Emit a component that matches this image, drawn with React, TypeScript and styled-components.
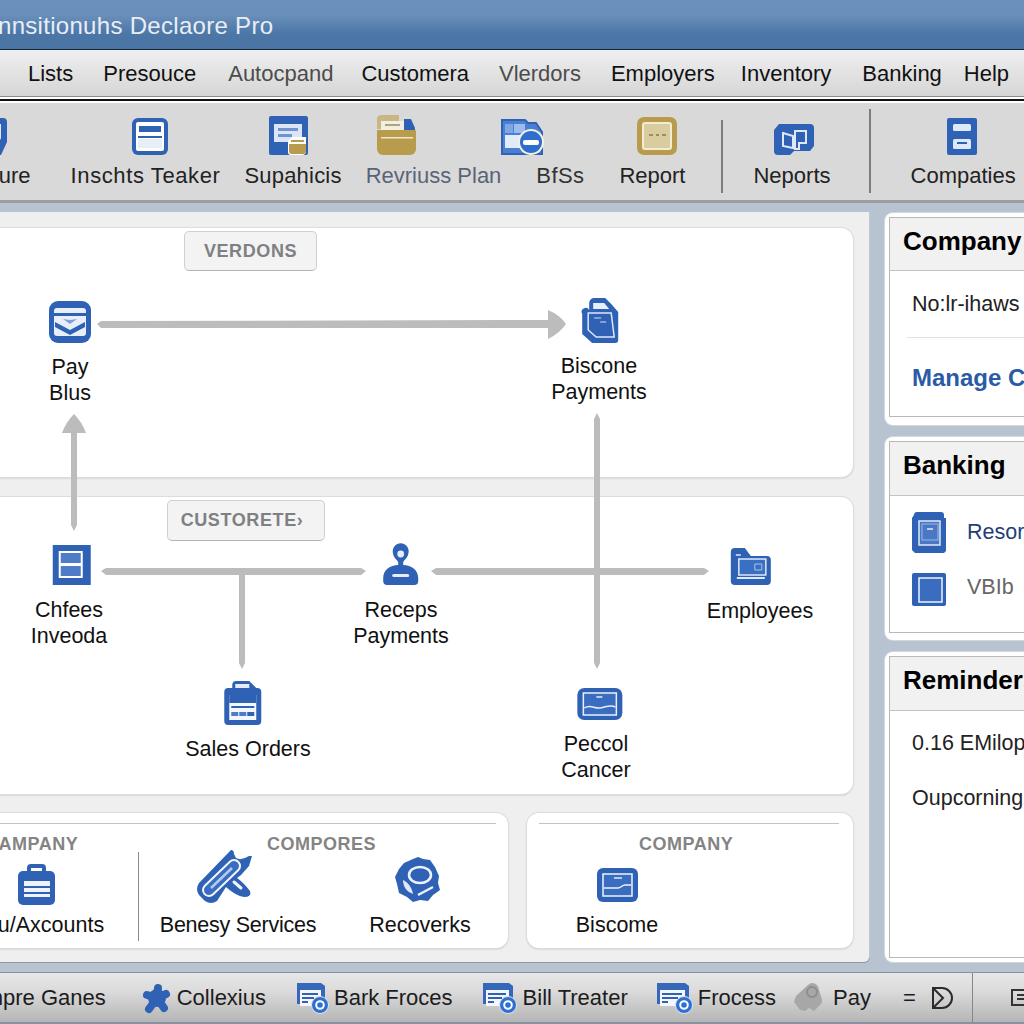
import React from "react";
import styled, { createGlobalStyle } from "styled-components";

const Global = createGlobalStyle`
  html, body { margin: 0; padding: 0; background: #b7c3d1; }
  body { font-family: "Liberation Sans", Arial, sans-serif; color: #111; }
`;
const BLUE = "#2f62b5";
const GOLD = "#b99b4e";

const Page = styled.div`
  width: 1024px; height: 1024px; overflow: hidden; display: flex; flex-direction: column;
  background: #b7c3d1;
`;
const TitleBar = styled.header`
  height: 49px; flex: none; display: flex; align-items: center;
  background: linear-gradient(#6b90bb 0, #6a8fba 30%, #4b76a6 70%, #4a74a4 100%);
  border-bottom: 1px solid #12233a; box-sizing: content-box;
`;
const Title = styled.h1`
  margin: 2px 0 0 -2px; font-size: 24px; font-weight: 400; letter-spacing: 0.3px; color: #e9eef6; line-height: 52px; white-space: nowrap;
`;
const MenuBar = styled.nav`
  height: 47px; flex: none; display: flex; align-items: center; padding: 2px 0 0 28px;
  background: linear-gradient(#efefef, #d6d6d6); border-bottom: 1px solid #8d8d8d; box-sizing: border-box;
`;
const MenuItem = styled.span<{ $gap: number; $dim?: boolean }>`
  margin-left: ${(p) => p.$gap}px; font-size: 22px; color: ${(p) => (p.$dim ? "#4c4c4c" : "#111")}; white-space: nowrap;
`;
const DoubleRule = styled.div`
  height: 6px; flex: none; border-top: 2px solid #fff; border-bottom: 2px solid #fff; box-sizing: border-box; background: #111;
`;
const Toolbar = styled.div`
  height: 97px; flex: none; display: flex; align-items: flex-start; margin-left: -55px;
  width: 1100px; background: #d9d9d9; border-bottom: 3px solid #9d9d9d; box-sizing: content-box;
`;
const ToolItem = styled.div<{ $gap: number }>`
  margin-left: ${(p) => p.$gap}px; display: flex; flex-direction: column; align-items: center;
`;
const ToolIcon = styled.div<{ $shift?: number }>`
  height: 52px; display: flex; align-items: flex-end; transform: translateX(${(p) => p.$shift || 0}px);
`;
const ToolLabel = styled.span<{ $tone?: string; $ls?: number }>`
  margin-top: 8px; font-size: 22px; line-height: 26px; letter-spacing: ${(p) => p.$ls || 0}px; color: ${(p) => p.$tone || "#222"}; white-space: nowrap;
`;
const ToolDivider = styled.div<{ $gap: number; $top: number }>`
  margin-left: ${(p) => p.$gap}px; margin-top: ${(p) => p.$top}px; width: 2px; height: ${(p) => 90 - p.$top}px; background: #7d7d7d;
`;
const Body = styled.div`
  flex: 1; min-height: 0; display: flex; align-items: flex-start; padding-top: 9px; gap: 15px;
`;
const Main = styled.main`
  margin-left: -20px; width: 890px; height: 750px; flex: none; box-sizing: border-box; padding: 16px 16px 0 0;
  background: #efefef; border-right: 1px solid #c4c8cc; border-radius: 0 0 6px 0; box-shadow: 0 1px 0 #8f98a3;
`;
const Diagram = styled.div`
  position: relative; display: flex; flex-direction: column; gap: 20px;
`;
const Card = styled.section<{ $h: number }>`
  height: ${(p) => p.$h}px; box-sizing: border-box; background: #fff; border-radius: 0 12px 12px 0; padding-top: 3px;
  box-shadow: 0 0 0 1px #dcdcdc, 0 1px 2px #b0b0b0;
`;
const Badge = styled.div<{ $left: number; $w: number; $h: number; $trim?: number }>`
  margin-left: ${(p) => p.$left}px; width: ${(p) => p.$w}px; height: ${(p) => p.$h}px; box-sizing: border-box;
  padding-right: ${(p) => p.$trim || 0}px;
  display: flex; align-items: center; justify-content: center; border: 1px solid #cfcfcf; border-bottom-color: #b4b4b4;
  border-radius: 5px; background: #f3f3f3; font-size: 18px; font-weight: 700; letter-spacing: 0.6px; color: #7e8083;
`;
const Canvas = styled.div`
  position: absolute; left: 20px; top: -228px; width: 1024px; height: 800px; pointer-events: none;
`;
const Wires = styled.svg`
  position: absolute; left: 0; top: 0;
`;
const Node = styled.div<{ $x: number; $y: number; $gap: number }>`
  position: absolute; left: ${(p) => p.$x}px; top: ${(p) => p.$y}px; transform: translateX(-50%);
  display: flex; flex-direction: column; align-items: center; gap: ${(p) => p.$gap}px;
`;
const NodeIcon = styled.div<{ $shift?: number }>`
  display: flex; transform: translateX(${(p) => p.$shift || 0}px);
`;
const NodeLabel = styled.div`
  font-size: 21.5px; line-height: 25.5px; text-align: center; white-space: pre; color: #111;
`;
const BottomRow = styled.div`
  display: flex; gap: 19px; margin-top: 19px;
`;
const BottomCard = styled.section<{ $w: number; $radius: string; $ruleLeft: number; $ruleRight: number }>`
  width: ${(p) => p.$w}px; height: 135px; box-sizing: border-box; padding-top: 10px; background: #fff; border-radius: ${(p) => p.$radius};
  box-shadow: 0 0 0 1px #dcdcdc, 0 1px 2px #b0b0b0; flex: none;
  &::before { content: ""; display: block; height: 1px; margin: 0 ${(p) => p.$ruleRight}px 10px ${(p) => p.$ruleLeft}px; background: #c4c4c4; }
`;
const GroupRow = styled.div`
  display: flex; height: 107px;
`;
const Group = styled.div<{ $w: number }>`
  width: ${(p) => p.$w}px; flex: none; display: flex; flex-direction: column;
`;
const GroupTitle = styled.div<{ $left: number }>`
  margin-left: ${(p) => p.$left}px; height: 21px; line-height: 21px; font-size: 18px; font-weight: 700; letter-spacing: 0.5px; color: #848484; white-space: nowrap;
`;
const GroupTools = styled.div`
  display: flex;
`;
const Tile = styled.div<{ $w: number; $left?: number }>`
  width: ${(p) => p.$w}px; margin-left: ${(p) => p.$left || 0}px; flex: none; display: flex; flex-direction: column; align-items: center;
`;
const TileIcon = styled.div<{ $shift?: number; $drop?: number }>`
  height: 50px; display: flex; align-items: flex-end; padding-bottom: ${(p) => p.$drop || 0}px; box-sizing: border-box;
  transform: translateX(${(p) => p.$shift || 0}px);
`;
const TileLabel = styled.div<{ $ls?: number }>`
  margin-top: 7px; font-size: 21.5px; line-height: 26px; letter-spacing: ${(p) => p.$ls || 0}px; white-space: nowrap; color: #111;
`;
const GroupDivider = styled.div`
  width: 1px; height: 89px; align-self: flex-end; background: #8a8a8a; flex: none;
`;
const Side = styled.aside`
  flex: none; width: 200px; display: flex; flex-direction: column; gap: 12px; margin-top: 1px;
`;
const SideCard = styled.section<{ $h: number; $pb: number }>`
  height: ${(p) => p.$h}px; box-sizing: border-box; padding: 4px 0 ${(p) => p.$pb}px 4px; background: #fff; border-radius: 8px 0 0 8px;
  box-shadow: 0 0 0 1px #d4d8dc; display: flex; flex-direction: column;
`;
const SideInner = styled.div`
  flex: 1; border: 1px solid #b9b9b9; border-right: 0; display: flex; flex-direction: column; min-height: 0;
`;
const SideHead = styled.h2<{ $h: number }>`
  margin: 0; height: ${(p) => p.$h}px; flex: none; box-sizing: border-box; padding-left: 13px; background: #f1f1f1; border-bottom: 1px solid #c4c4c4;
  font-size: 26px; line-height: 46px; font-weight: 700; color: #000; white-space: nowrap;
`;
const SideText = styled.div<{ $top: number; $tone?: string }>`
  margin: ${(p) => p.$top}px 0 0 22px; font-size: 21.5px; line-height: 26px; color: ${(p) => p.$tone || "#222"}; white-space: nowrap;
`;
const SideRule = styled.div`
  margin: 20px 0 0 17px; height: 1px; background: #e2e2e2;
`;
const SideLink = styled.a`
  display: block; margin: 26px 0 0 22px; font-size: 24px; line-height: 28px; font-weight: 700; color: #2a5ba6; white-space: nowrap;
`;
const BankRow = styled.div<{ $top: number }>`
  display: flex; align-items: center; gap: 21px; margin: ${(p) => p.$top}px 0 0 22px;
`;
const BankText = styled.span<{ $tone: string; $lift?: number }>`
  font-size: 21.5px; color: ${(p) => p.$tone}; white-space: nowrap; margin-bottom: ${(p) => p.$lift || 0}px;
`;
const StatusBar = styled.footer`
  height: 49px; margin-top: 10px; flex: none; display: flex; align-items: center; width: 1100px; margin-left: -30px;
  background: linear-gradient(#e6e6e6, #dcdcdc 35%, #b5b5b5);
  border-top: 1px solid #8593a3; border-bottom: 2px solid #8593a3; box-sizing: content-box;
`;
const StatusIcon = styled.span<{ $gap: number }>`
  margin-left: ${(p) => p.$gap}px; display: flex; flex: none;
`;
const StatusText = styled.span<{ $gap: number }>`
  margin-left: ${(p) => p.$gap}px; font-size: 22px; color: #1c1c1c; white-space: nowrap;
`;
const StatusDivider = styled.span<{ $gap: number }>`
  margin-left: ${(p) => p.$gap}px; width: 1px; align-self: stretch; background: #7f8994; flex: none;
`;

type S = { w: number; h: number; children: React.ReactNode };
const I = ({ w, h, children }: S) => (
  <svg width={w} height={h} viewBox={`0 0 ${w} ${h}`} style={{ display: "block", overflow: "visible" }}>{children}</svg>
);

const Clock = ({ x, y }: { x: number; y: number }) => (
  <g>
    <circle cx={x} cy={y} r="8.5" fill="#2f6fd0" stroke="#dfe7f2" strokeWidth="1" />
    <circle cx={x} cy={y} r="3.8" fill="none" stroke="#fff" strokeWidth="2" />
  </g>
);

const IconMeasure = () => (
  <I w={34} h={37}>
    <path d="M0 0h30a4 4 0 0 1 4 4v20l-6 13H0z" fill={BLUE} />
    <path d="M4 6h24v14l-5 11H4z" fill="#dfe8f6" />
    <path d="M8 10h16v4H8z M8 18h14v3H8z" fill={BLUE} />
  </I>
);
const IconLedger = () => (
  <I w={36} h={37}>
    <rect width="36" height="37" rx="6" fill={BLUE} />
    <rect x="4" y="4" width="28" height="29" rx="2" fill="#fff" />
    <rect x="7" y="8" width="22" height="6" fill={BLUE} />
    <rect x="6" y="18" width="24" height="2" fill={BLUE} />
    <rect x="6" y="21" width="24" height="9" fill="#e8eef8" />
  </I>
);
const IconSup = () => (
  <I w={39} h={39}>
    <rect width="39" height="39" rx="2" fill={BLUE} />
    <rect x="5" y="8" width="28" height="18" fill="#dbe5f5" />
    <rect x="9" y="12" width="20" height="3" fill="#6f93cf" />
    <rect x="9" y="18" width="14" height="3" fill="#6f93cf" />
    <path d="M19 25l4-4h14v14a4 4 0 0 1-4 4H22a3 3 0 0 1-3-3z" fill="#fff" />
    <path d="M20 28h17v7a3 3 0 0 1-3 3H23a3 3 0 0 1-3-3z" fill={GOLD} />
    <path d="M22 24h13v2H22z" fill={GOLD} />
  </I>
);
const IconFolder = () => (
  <I w={39} h={40}>
    <path d="M0 5a4 4 0 0 1 4-5h18v14H0z" fill="#c9b682" />
    <rect x="4" y="6" width="24" height="12" fill="#f3efdf" />
    <rect x="8" y="9" width="15" height="2" fill="#aaa38a" />
    <path d="M27 4h7l4 9v6H27z" fill={BLUE} />
    <path d="M0 15h38a1 1 0 0 1 1 1v18a6 6 0 0 1-6 6H6a6 6 0 0 1-6-6z" fill={GOLD} />
    <rect x="4" y="22" width="32" height="1.5" fill="#efe7cc" />
  </I>
);
const IconBfs = () => (
  <I w={42} h={37}>
    <path d="M1 2h23l3 3h8l6 9v22H1z" fill="#4a80d2" stroke={BLUE} strokeWidth="2" />
    <rect x="4" y="6" width="8" height="9" fill="#7fa6e6" />
    <rect x="13" y="6" width="11" height="9" fill="#9dbcee" />
    <rect x="4" y="17" width="15" height="13" fill="#e2ebf9" />
    <circle cx="30" cy="24" r="13" fill="#f4f1e0" />
    <circle cx="30" cy="24" r="11" fill="#2e6ed0" />
    <rect x="22" y="22" width="16" height="5" rx="2" fill="#fff" />
  </I>
);
const IconReport = () => (
  <I w={40} h={38}>
    <rect width="40" height="38" rx="7" fill={GOLD} />
    <rect x="6" y="6" width="28" height="26" rx="2" fill="#d9cc9f" stroke="#f2ecd3" strokeWidth="2" />
    <path d="M12 18h4m3 0h3m3 0h4" stroke="#8d7a40" strokeWidth="1.5" />
  </I>
);
const IconNeports = () => (
  <I w={40} h={31}>
    <path d="M5 0h31a4 4 0 0 1 4 4v18l-4 5H20l-4 4H4a4 4 0 0 1-4-4V6z" fill={BLUE} />
    <path d="M9 9l10 3v12l-10-2z" fill="none" stroke="#dfe8f6" strokeWidth="2" />
    <path d="M21 7h11v12h-7v6h-4z" fill="none" stroke="#dfe8f6" strokeWidth="2" />
  </I>
);
const IconCompanies = () => (
  <I w={30} h={37}>
    <rect width="30" height="37" rx="2" fill={BLUE} />
    <rect x="6" y="6" width="18" height="7" rx="1.5" fill="#dfe8f6" />
    <rect x="6" y="21" width="18" height="10" rx="1.5" fill="#dfe8f6" />
    <rect x="10" y="24" width="10" height="2" fill={BLUE} />
  </I>
);
const IconPay = () => (
  <I w={42} h={42}>
    <rect width="42" height="42" rx="9" fill={BLUE} />
    <rect x="5" y="7" width="32" height="28" rx="3" fill="#e9effa" />
    <rect x="5" y="12" width="32" height="3" fill={BLUE} />
    <path d="M6 21l15 8 15-8v5l-15 8-15-8z" fill={BLUE} />
    <path d="M14 18l7 5 7-5-7 1z" fill="#7fa0d8" />
  </I>
);
const IconBag = () => (
  <I w={36} h={45}>
    <path d="M7 12V5a5 5 0 0 1 5-5h11l6 6 7 8v28a3 3 0 0 1-3 3H10l-10-9V16a4 4 0 0 1 7-4z" fill={BLUE} />
    <path d="M11 11V5h11l5 6z" fill="#e9eff9" />
    <path d="M6 15h23l3 24H14l-8-7z" fill="none" stroke="#dfe8f6" strokeWidth="1.5" />
    <path d="M12 20h7m-1 4h6" stroke="#9db7e3" strokeWidth="1.5" />
  </I>
);
const IconInvoice = () => (
  <I w={38} h={40}>
    <rect width="38" height="40" fill={BLUE} />
    <rect x="6" y="6" width="24" height="27" fill="#fff" />
    <rect x="8" y="8" width="20" height="10" fill="#4e7cc6" />
    <rect x="8" y="21" width="20" height="10" fill="#4e7cc6" />
  </I>
);
const IconPerson = () => (
  <I w={35} h={40}>
    <path d="M10 9a8 8 0 1 1 15 0c0 3-4 6-5 8v3c8 0 15 5 15 13v3a4 4 0 0 1-4 4H4a4 4 0 0 1-4-4v-3c0-8 7-13 15-13v-3c-1-2-5-5-5-8z" fill={BLUE} />
    <circle cx="17.5" cy="9" r="3.4" fill="#e6edf8" />
    <rect x="9" y="29" width="17" height="3" rx="1.5" fill="#e6edf8" />
  </I>
);
const IconEmployees = () => (
  <I w={40} h={37}>
    <path d="M0 4a4 4 0 0 1 4-4h10l6 8h16a4 4 0 0 1 4 4v21a4 4 0 0 1-4 4H4a4 4 0 0 1-4-4z" fill={BLUE} />
    <rect x="8" y="11" width="27" height="16" fill="#3a70c4" stroke="#dfe8f6" strokeWidth="1.5" />
    <path d="M6 30h28" stroke="#dfe8f6" strokeWidth="2" />
    <path d="M5 7h5" stroke="#dfe8f6" strokeWidth="1.5" />
    <path d="M24 16h7v6h-7z" fill="none" stroke="#a9c0e6" strokeWidth="1" />
  </I>
);
const IconSales = () => (
  <I w={37} h={44}>
    <path d="M8 7V4a4 4 0 0 1 4-4h13l6 6 2 2H8z" fill={BLUE} />
    <rect x="11" y="3" width="14" height="5" fill="#e6edf8" />
    <rect y="7" width="37" height="37" rx="4" fill={BLUE} />
    <rect x="5" y="14" width="27" height="25" fill="#f3f6fb" />
    <rect x="5" y="14" width="27" height="8" fill={BLUE} />
    <rect x="7" y="25" width="23" height="2" fill={BLUE} />
    <rect x="7" y="31" width="7" height="4" fill="#4e7cc6" />
    <rect x="15" y="31" width="7" height="4" fill="#4e7cc6" />
    <rect x="23" y="31" width="7" height="4" fill={BLUE} />
  </I>
);
const IconPeccol = () => (
  <I w={45} h={32}>
    <rect width="45" height="32" rx="7" fill={BLUE} />
    <rect x="6" y="5" width="33" height="22" fill="#3a6dc0" stroke="#eaf0fa" strokeWidth="1.5" />
    <path d="M7 20c6-4 10 1 16 0s10-4 15-1" fill="none" stroke="#e6edf8" strokeWidth="1.5" />
    <path d="M19 9h6" stroke="#e6edf8" strokeWidth="1.5" />
  </I>
);
const IconCase = () => (
  <I w={37} h={42}>
    <path d="M9 9V5a4 4 0 0 1 4-4h11a4 4 0 0 1 4 4v4h-4V5H13v4z" fill={BLUE} />
    <rect y="8" width="37" height="34" rx="5" fill={BLUE} />
    <rect x="6" y="18" width="26" height="16" fill="#eef3fb" />
    <rect x="6" y="23" width="26" height="2" fill={BLUE} />
    <rect x="6" y="29" width="26" height="2" fill={BLUE} />
  </I>
);
const IconClip = () => (
  <I w={56} h={56}>
    <path d="M34 1q3 0 3 4l2 4q5 3 13-2h3l-3 10-8 9-4 3q6 4 13 13 2 6-6 6-8-1-18-10L20 52q-6 4-12 0l-6-6q-4-6 0-12z" fill={BLUE} />
    <path d="M12 41L37 17" stroke="#f2f6fc" strokeWidth="14" strokeLinecap="round" />
    <path d="M12 41L37 17" stroke="#3a6cc0" strokeWidth="10" strokeLinecap="round" />
    <path d="M14 39L35 19" stroke="#b4cbed" strokeWidth="2.5" />
    <path d="M37 33l7 6" stroke="#f2f6fc" strokeWidth="3" strokeLinecap="round" />
  </I>
);
const IconGear = () => (
  <I w={45} h={45}>
    <path d="M18 2l5-2 5 2 7 1 5 7 4 9-1 7 2 7-7 5-5 6-8-1-7 2-6-5-8-4-2-9-2-7 4-8 5-6z" fill={BLUE} />
    <ellipse cx="25" cy="18" rx="11" ry="8" fill="#2f62b5" stroke="#eef3fb" strokeWidth="2.5" />
    <path d="M8 23c5 2 9 8 10 14-6-2-10-7-10-14z" fill="#dfe8f6" />
    <path d="M23 38l15-8" stroke="#eef3fb" strokeWidth="2.5" />
  </I>
);
const IconBiscome = () => (
  <I w={41} h={34}>
    <rect width="41" height="34" rx="6" fill={BLUE} />
    <rect x="6" y="6" width="29" height="22" fill="#3a6dc0" stroke="#eef3fb" strokeWidth="1.5" />
    <path d="M7 20h14c3 0 4-3 7-3h6" fill="none" stroke="#eef3fb" strokeWidth="1.5" />
    <path d="M17 10h8" stroke="#dfe8f6" strokeWidth="1.5" />
  </I>
);
const IconResor = () => (
  <I w={34} h={41}>
    <path d="M2 3a3 3 0 0 1 3-3h24a3 3 0 0 1 3 3v3h2v33l-2 2H3l-3-3V6z" fill={BLUE} />
    <rect x="7" y="9" width="21" height="24" fill="#4a78c5" stroke="#dfe8f6" strokeWidth="1.5" />
    <rect x="10" y="12" width="16" height="16" fill="none" stroke="#9db7e3" strokeWidth="1" />
    <path d="M15 17h6" stroke="#e6edf8" strokeWidth="1.5" />
  </I>
);
const IconSquare = () => (
  <I w={34} h={33}>
    <rect width="34" height="33" rx="2" fill={BLUE} />
    <rect x="7" y="5" width="23" height="24" fill="#3a6dc0" stroke="#eef3fb" strokeWidth="1.5" />
  </I>
);
const IconStar = () => (
  <I w={27} h={30}>
    <circle cx="14" cy="15" r="9" fill={BLUE} />
    <path d="M14 15L15 5M14 15L23 11M14 15L21 25M14 15L6 26M14 15L4 12" stroke={BLUE} strokeWidth="8" strokeLinecap="round" />
  </I>
);
const IconForm = ({ w = 30 }: { w?: number }) => (
  <I w={w} h={32}>
    <path d={`M0 1h${w - 6}l4 3v18H0z`} fill="#3568ba" />
    <rect x="3" y="8" width={w - 9} height="16" fill="#f4f6fa" />
    <path d={`M5 12h${w - 14}M5 16h${w - 18}M5 20h6`} stroke={BLUE} strokeWidth="2" />
    <Clock x={w - 7} y={23} />
  </I>
);
const IconTag = () => (
  <I w={30} h={29}>
    <path d="M18 0a7 7 0 0 1 8 7l3 10a4 4 0 0 1-1 4l-7 7-5-3-4 3-5-1-6-8 2-6L15 2z" fill="#a7a7a7" />
    <circle cx="19" cy="9" r="5" fill="none" stroke="#8d8d8d" strokeWidth="2" />
  </I>
);
const IconSum = () => (
  <I w={21} h={22}>
    <path d="M1 1h9a10 10 0 0 1 0 20H1z" fill="none" stroke="#2b2b2b" strokeWidth="2" />
    <path d="M1 1l10 10L1 21" fill="none" stroke="#2b2b2b" strokeWidth="2" />
  </I>
);
const IconEnd = () => (
  <I w={28} h={18}>
    <rect x="1" y="1" width="26" height="15" fill="none" stroke="#333" strokeWidth="2" />
    <path d="M6 6h20M6 10h20" stroke="#333" strokeWidth="2" />
  </I>
);

const menu: [string, number, boolean?][] = [
  ["Lists", 0], ["Presouce", 30], ["Autocpand", 32, true], ["Customera", 28], ["Vlerdors", 30, true],
  ["Employers", 30], ["Inventory", 26], ["Banking", 31], ["Help", 22],
];

const nodes: { x: number; y: number; gap: number; label: string; icon: React.ReactNode; shift?: number }[] = [
  { x: 70, y: 301, gap: 12, label: "Pay\nBlus", icon: <IconPay /> },
  { x: 599, y: 298, gap: 11, label: "Biscone\nPayments", icon: <IconBag />, shift: 1 },
  { x: 69, y: 545, gap: 13, label: "Chfees\nInveoda", icon: <IconInvoice />, shift: 3 },
  { x: 401, y: 545, gap: 13, label: "Receps\nPayments", icon: <IconPerson /> },
  { x: 760, y: 548, gap: 14, label: "Employees", icon: <IconEmployees />, shift: -9 },
  { x: 248, y: 681, gap: 12, label: "Sales Orders", icon: <IconSales />, shift: -5 },
  { x: 596, y: 688, gap: 12, label: "Peccol\nCancer", icon: <IconPeccol />, shift: 4 },
];

export default function App() {
  return (
    <Page>
      <Global />
      <TitleBar>
        <Title>nnsitionuhs Declaore Pro</Title>
      </TitleBar>
      <MenuBar>
        {menu.map(([t, g, d]) => (
          <MenuItem key={t} $gap={g} $dim={d}>{t}</MenuItem>
        ))}
      </MenuBar>
      <DoubleRule />
      <Toolbar>
        <ToolItem $gap={0}><ToolIcon $shift={2}><IconMeasure /></ToolIcon><ToolLabel>Measure</ToolLabel></ToolItem>
        <ToolItem $gap={40}><ToolIcon $shift={4}><IconLedger /></ToolIcon><ToolLabel $ls={0.6}>Inschts Teaker</ToolLabel></ToolItem>
        <ToolItem $gap={24}><ToolIcon $shift={-5}><IconSup /></ToolIcon><ToolLabel $ls={0.2}>Supahicis</ToolLabel></ToolItem>
        <ToolItem $gap={24}><ToolIcon $shift={-37}><IconFolder /></ToolIcon><ToolLabel $tone="#5a6478">Revriuss Plan</ToolLabel></ToolItem>
        <ToolItem $gap={35}><ToolIcon $shift={-38}><IconBfs /></ToolIcon><ToolLabel $tone="#333" $ls={0.4}>BfSs</ToolLabel></ToolItem>
        <ToolItem $gap={35}><ToolIcon $shift={5}><IconReport /></ToolIcon><ToolLabel>Report</ToolLabel></ToolItem>
        <ToolDivider $gap={36} $top={17} />
        <ToolItem $gap={30}><ToolIcon $shift={2}><IconNeports /></ToolIcon><ToolLabel>Neports</ToolLabel></ToolItem>
        <ToolDivider $gap={38} $top={6} />
        <ToolItem $gap={40}><ToolIcon $shift={-1}><IconCompanies /></ToolIcon><ToolLabel>Compaties</ToolLabel></ToolItem>
      </Toolbar>
      <Body>
        <Main>
          <Diagram>
            <Card $h={249}>
              <Badge $left={204} $w={133} $h={40}>VERDONS</Badge>
            </Card>
            <Card $h={297}>
              <Badge $left={187} $w={158} $h={41} $trim={8}>CUSTORETE›</Badge>
            </Card>
            <Canvas>
              <Wires width="1024" height="800" viewBox="0 0 1024 800">
                <g fill="#bcbcbc">
                  <path d="M97 324l4-3 447-1v-10q12 5 18 14-6 9-18 15v-11l-447 0z" />
                  <path d="M74 414q8 8 12 19h-9v92l-3 6-3-6v-92h-9q4-11 12-19z" />
                  <path d="M101 571l5-3h255l5 3-5 4H106z" />
                  <path d="M431 571l5-3h268l5 3-5 4H436z" />
                  <path d="M239 575h6v88l-3 6-3-6z" />
                  <path d="M597 413l3 6v244l-3 6-3-6V419z" />
                </g>
              </Wires>
              {nodes.map((n) => (
                <Node key={n.label} $x={n.x} $y={n.y} $gap={n.gap}>
                  <NodeIcon $shift={n.shift}>{n.icon}</NodeIcon>
                  <NodeLabel>{n.label}</NodeLabel>
                </Node>
              ))}
            </Canvas>
          </Diagram>
          <BottomRow>
            <BottomCard $w={528} $radius="0 12px 12px 0" $ruleLeft={0} $ruleRight={12}>
              <GroupRow>
                <Group $w={158}>
                  <GroupTitle $left={8}>FAMPANY</GroupTitle>
                  <GroupTools>
                    <Tile $w={142}><TileIcon $shift={-15}><IconCase /></TileIcon><TileLabel>u/Axcounts</TileLabel></Tile>
                  </GroupTools>
                </Group>
                <GroupDivider />
                <Group $w={360}>
                  <GroupTitle $left={128}>COMPORES</GroupTitle>
                  <GroupTools>
                    <Tile $w={178} $left={10}><TileIcon $shift={-13}><IconClip /></TileIcon><TileLabel $ls={-0.25}>Benesy Services</TileLabel></Tile>
                    <Tile $w={182} $left={2}><TileIcon $drop={3} $shift={-3}><IconGear /></TileIcon><TileLabel>Recoverks</TileLabel></Tile>
                  </GroupTools>
                </Group>
              </GroupRow>
            </BottomCard>
            <BottomCard $w={326} $radius="12px" $ruleLeft={12} $ruleRight={14}>
              <Group $w={326}>
                <GroupTitle $left={112}>COMPANY</GroupTitle>
                <GroupTools>
                  <Tile $w={180}><TileIcon $drop={3}><IconBiscome /></TileIcon><TileLabel>Biscome</TileLabel></Tile>
                </GroupTools>
              </Group>
            </BottomCard>
          </BottomRow>
        </Main>
        <Side>
          <SideCard $h={212} $pb={8}>
            <SideInner>
              <SideHead $h={53}>Company</SideHead>
              <SideText $top={20}>No:lr-ihaws</SideText>
              <SideRule />
              <SideLink>Manage Company</SideLink>
            </SideInner>
          </SideCard>
          <SideCard $h={203} $pb={7}>
            <SideInner>
              <SideHead $h={54}>Banking</SideHead>
              <BankRow $top={16}><IconResor /><BankText $tone="#1f3f78">Resorts</BankText></BankRow>
              <BankRow $top={20}><IconSquare /><BankText $tone="#666" $lift={4}>VBIb</BankText></BankRow>
            </SideInner>
          </SideCard>
          <SideCard $h={310} $pb={4}>
            <SideInner>
              <SideHead $h={54}>Reminders</SideHead>
              <SideText $top={19}>0.16 EMiloph</SideText>
              <SideText $top={29}>Oupcorning</SideText>
            </SideInner>
          </SideCard>
        </Side>
      </Body>
      <StatusBar>
        <StatusText $gap={0}>Empre Ganes</StatusText>
        <StatusIcon $gap={37}><IconStar /></StatusIcon>
        <StatusText $gap={7}>Collexius</StatusText>
        <StatusIcon $gap={31}><IconForm /></StatusIcon>
        <StatusText $gap={7}>Bark Froces</StatusText>
        <StatusIcon $gap={30}><IconForm w={32} /></StatusIcon>
        <StatusText $gap={8}>Bill Treater</StatusText>
        <StatusIcon $gap={29}><IconForm w={34} /></StatusIcon>
        <StatusText $gap={7}>Frocess</StatusText>
        <StatusIcon $gap={17}><IconTag /></StatusIcon>
        <StatusText $gap={10}>Pay</StatusText>
        <StatusText $gap={32}>=</StatusText>
        <StatusIcon $gap={16}><IconSum /></StatusIcon>
        <StatusDivider $gap={19} />
        <StatusIcon $gap={38}><IconEnd /></StatusIcon>
      </StatusBar>
    </Page>
  );
}
